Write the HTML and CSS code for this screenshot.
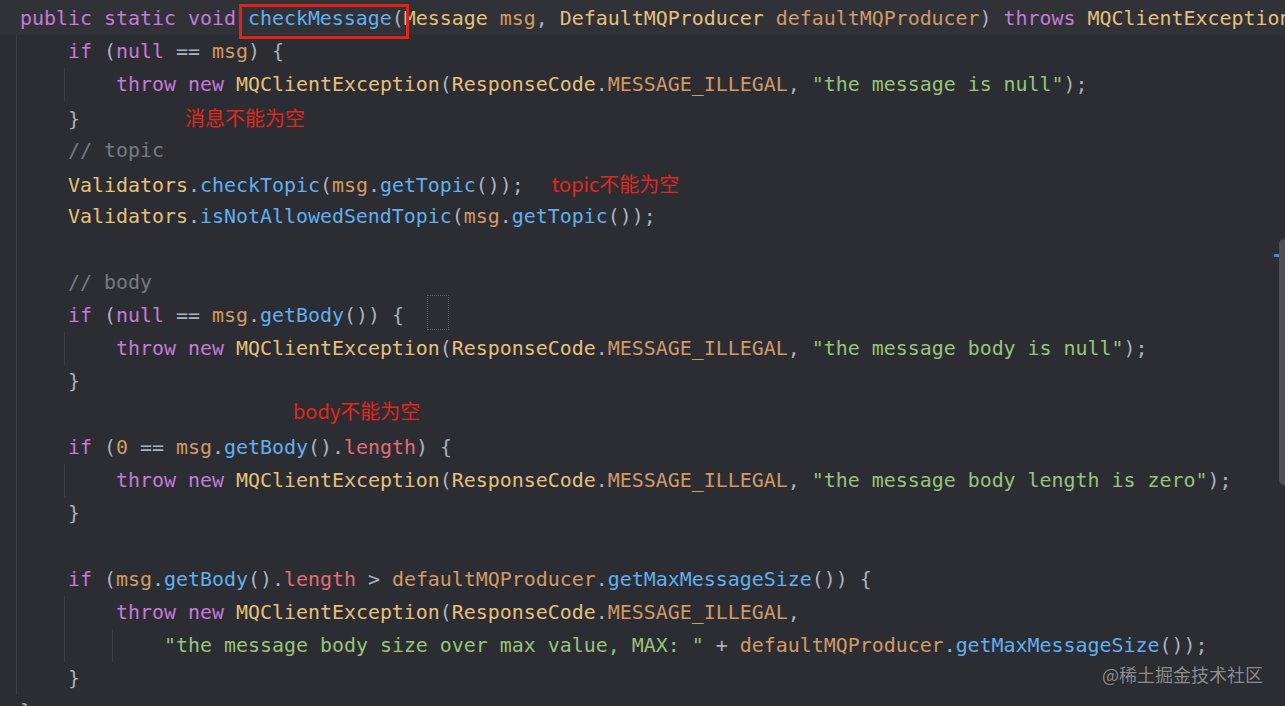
FILE: index.html
```html
<!DOCTYPE html>
<html lang="zh-CN">

<head>
    <meta charset="UTF-8">
    <title>checkMessage</title>
    <link rel="stylesheet" href="styles.css">
</head>

<body>
    <div class="editor">
        <div class="code-area">
            <div class="line current"><span class="code"><span class="k">public static void</span> <span class="mark"><span class="f">checkMessage</span></span>(<span class="t">Message</span> <span class="v">msg</span>, <span class="t">DefaultMQProducer</span> <span class="v">defaultMQProducer</span>) <span class="k">throws</span> <span class="t">MQClientException</span> {</span></div>
            <div class="line"><span class="ind"></span><span class="code"><span class="k">if</span> (<span class="k">null</span> == <span class="v">msg</span>) {</span></div>
            <div class="line"><span class="ind"></span><span class="ind"></span><span class="code"><span class="k">throw new</span> <span class="t">MQClientException</span>(<span class="t">ResponseCode</span>.<span class="v">MESSAGE_ILLEGAL</span>, <span class="s">"the message is null"</span>);</span></div>
            <div class="line"><span class="ind"></span><span class="code">}<span class="note note-msg">消息不能为空</span></span></div>
            <div class="line"><span class="ind"></span><span class="code"><span class="c">// topic</span></span></div>
            <div class="line"><span class="ind"></span><span class="code"><span class="t">Validators</span>.<span class="f">checkTopic</span>(<span class="v">msg</span>.<span class="f">getTopic</span>());<span class="note note-topic">topic不能为空</span></span></div>
            <div class="line"><span class="ind"></span><span class="code"><span class="t">Validators</span>.<span class="f">isNotAllowedSendTopic</span>(<span class="v">msg</span>.<span class="f">getTopic</span>());</span></div>
            <div class="line"><span class="ind"></span><span class="code"></span></div>
            <div class="line"><span class="ind"></span><span class="code"><span class="c">// body</span></span></div>
            <div class="line"><span class="ind"></span><span class="code"><span class="k">if</span> (<span class="k">null</span> == <span class="v">msg</span>.<span class="f">getBody</span>()) {<span class="caret-box"></span></span></div>
            <div class="line"><span class="ind"></span><span class="ind"></span><span class="code"><span class="k">throw new</span> <span class="t">MQClientException</span>(<span class="t">ResponseCode</span>.<span class="v">MESSAGE_ILLEGAL</span>, <span class="s">"the message body is null"</span>);</span></div>
            <div class="line"><span class="ind"></span><span class="code">}</span></div>
            <div class="line"><span class="ind"></span><span class="code"><span class="note note-body">body不能为空</span></span></div>
            <div class="line"><span class="ind"></span><span class="code"><span class="k">if</span> (<span class="v">0</span> == <span class="v">msg</span>.<span class="f">getBody</span>().<span class="fl">length</span>) {</span></div>
            <div class="line"><span class="ind"></span><span class="ind"></span><span class="code"><span class="k">throw new</span> <span class="t">MQClientException</span>(<span class="t">ResponseCode</span>.<span class="v">MESSAGE_ILLEGAL</span>, <span class="s">"the message body length is zero"</span>);</span></div>
            <div class="line"><span class="ind"></span><span class="code">}</span></div>
            <div class="line"><span class="ind"></span><span class="code"></span></div>
            <div class="line"><span class="ind"></span><span class="code"><span class="k">if</span> (<span class="v">msg</span>.<span class="f">getBody</span>().<span class="fl">length</span> &gt; <span class="v">defaultMQProducer</span>.<span class="f">getMaxMessageSize</span>()) {</span></div>
            <div class="line"><span class="ind"></span><span class="ind"></span><span class="code"><span class="k">throw new</span> <span class="t">MQClientException</span>(<span class="t">ResponseCode</span>.<span class="v">MESSAGE_ILLEGAL</span>,</span></div>
            <div class="line"><span class="ind"></span><span class="ind"></span><span class="ind"></span><span class="code"><span class="s">"the message body size over max value, MAX: "</span> + <span class="v">defaultMQProducer</span>.<span class="f">getMaxMessageSize</span>());</span></div>
            <div class="line"><span class="ind"></span><span class="code">}</span></div>
            <div class="line"><span class="code">}</span></div>
        </div>

        <!-- barra de rolagem e marca de erro -->
        <div class="stripe-mark"></div>
        <div class="scroll-thumb"></div>

        <div class="watermark">@稀土掘金技术社区</div>
    </div>
</body>

</html>
```

FILE: styles.css
```css
body {
    margin: 0;
    padding: 0;
    background-color: #2b2d32;
    overflow: hidden;
}

.editor {
    position: relative;
    width: 1285px;
    height: 706px;
    overflow: hidden;
    background-color: #2b2d32;
}

.code-area {
    font-family: "DejaVu Sans Mono", "Liberation Mono", monospace;
    font-size: 19.93px;
    color: #abb2bf;
}

.line {
    height: 33px;
    line-height: 33px;
    padding-left: 16px;
    white-space: pre;
}

.line.current {
    height: 35px;
    line-height: 37px;
    background-color: #303238;
}

.ind {
    display: inline-block;
    width: 48px;
    height: 33px;
    vertical-align: top;
    border-left: 1px solid #3a3d44;
    box-sizing: border-box;
}

.code {
    padding-left: 4px;
}

/* cores da sintaxe */
.k { color: #c679d9; }
.f { color: #61afef; }
.t { color: #e5c07b; }
.v { color: #d19a66; }
.s { color: #98c379; }
.c { color: #767a83; }
.fl { color: #e06c75; }

/* anotações em vermelho */
.mark {
    position: relative;
}

.mark::after {
    content: "";
    position: absolute;
    left: -9px;
    top: -3px;
    width: 164px;
    height: 29px;
    border: 3px solid #e0221b;
}

.note {
    position: relative;
    font-family: "Noto Sans CJK SC", sans-serif;
    font-size: 20px;
    color: #e0281f;
}

.note-msg {
    margin-left: 105px;
}

.note-topic {
    margin-left: 28px;
}

.note-body {
    margin-left: 225px;
    top: -4px;
}

.caret-box {
    display: inline-block;
    position: relative;
    top: -4px;
    margin-left: 23px;
    width: 22px;
    height: 35px;
    vertical-align: middle;
    border: 1px dotted #5c5f66;
    box-sizing: border-box;
}

.scroll-thumb {
    position: absolute;
    left: 1279px;
    top: 239px;
    width: 12px;
    height: 246px;
    border-radius: 5px;
    background-color: #4c4f55;
}

.stripe-mark {
    position: absolute;
    left: 1274px;
    top: 254px;
    width: 11px;
    height: 3px;
    background-color: #4f7ed6;
}

.watermark {
    position: absolute;
    right: 22px;
    top: 661px;
    font-family: "Noto Sans CJK SC", sans-serif;
    font-size: 18px;
    color: #8c8e93;
    text-shadow: 0 0 1px #1f2023;
}
```
